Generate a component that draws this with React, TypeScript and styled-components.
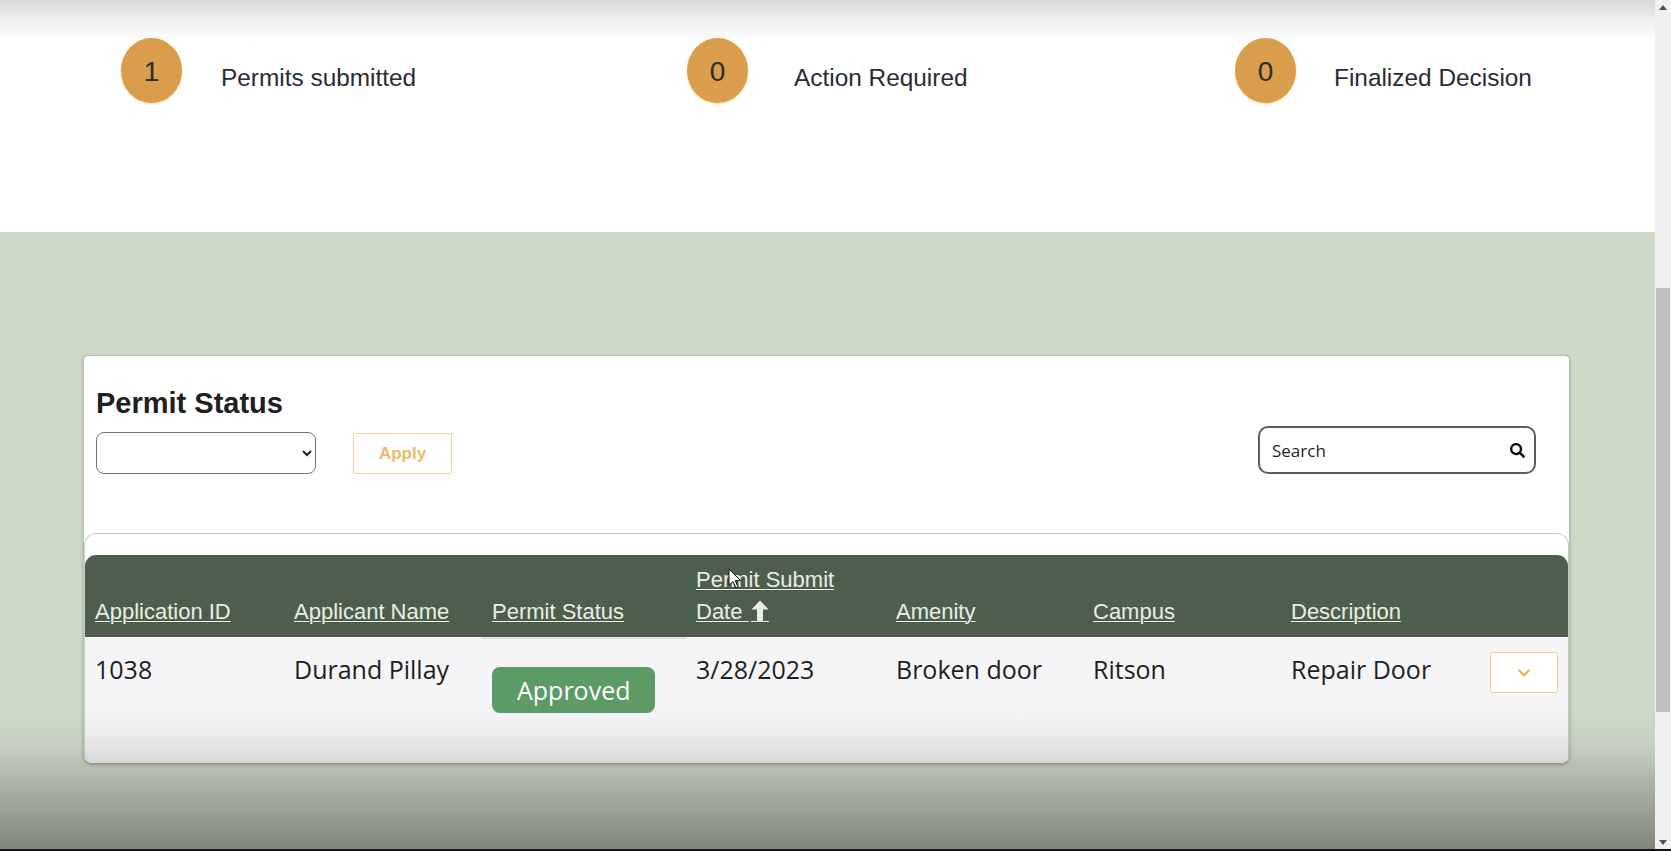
import React from "react";
import styled, { createGlobalStyle } from "styled-components";
import { FaSearch, FaChevronDown } from "react-icons/fa";

const GlobalStyle = createGlobalStyle`
  html, body { margin: 0; padding: 0; height: 100%; overflow: hidden; }
  body { font-family: "Liberation Sans", Arial, sans-serif; background: #cfd9c8; }
  #root { height: 100%; }
  * { box-sizing: border-box; }
`;

const COLUMNS = "199px 198px 204px 200px 197px 198px 199px 1fr";

const Screen = styled.div`
  position: relative;
  display: flex;
  width: 1671px;
  height: 851px;
  overflow: hidden;
  border-bottom: 2px solid #151515;
`;

const Page = styled.main`
  position: relative;
  flex: 1;
  min-width: 0;
  display: flex;
  flex-direction: column;
  background: #cfd9c8;
`;

const StatsBand = styled.section`
  height: 232px;
  flex: none;
  padding: 38px 0 0 121px;
  background: linear-gradient(#d8d8d8 0, #efefef 20px, #ffffff 42px);
  display: grid;
  grid-template-columns: 566px 548px 1fr;
  align-items: start;
`;

const Stat = styled.div<{ $gap: number }>`
  display: flex;
  align-items: flex-start;
  gap: ${(p) => p.$gap}px;
`;

const Bubble = styled.div`
  flex: none;
  width: 61px;
  height: 65px;
  border-radius: 50%;
  background: #d99d4b;
  box-shadow: 0 1px 2px rgba(255, 205, 110, 0.7);
  display: flex;
  align-items: center;
  justify-content: center;
  padding-top: 3px;
  font-size: 28px;
  color: #2a2a2a;
`;

const StatLabel = styled.span`
  margin-top: 25px;
  font-size: 24.4px;
  line-height: 29px;
  color: #2a2b33;
  white-space: nowrap;
`;

const Content = styled.section`
  flex: 1;
  padding: 123px 85px 0 83px;
`;

const Card = styled.div`
  background: #ffffff;
  border: 1px solid #b4c4ae;
  border-bottom-color: #9ea89b;
  border-radius: 5px 5px 9px 9px;
  box-shadow: 0 1px 3px rgba(50, 60, 45, 0.35);
  overflow: hidden;
`;

const Filters = styled.div`
  padding: 31px 33px 59px 12px;
`;

const Title = styled.h2`
  margin: 0 0 6px;
  font: bold 29px/33px "Liberation Sans", Arial, sans-serif;
  color: #202020;
`;

const Controls = styled.div`
  display: flex;
  align-items: flex-end;
`;

const StatusSelect = styled.select`
  width: 220px;
  height: 42px;
  border: 1.5px solid #747474;
  border-radius: 8px;
  background: #fff;
  padding: 0 8px;
  font: 17px "Open Sans", sans-serif;
  color: #222;
`;

const ApplyButton = styled.button`
  margin-left: 37px;
  width: 99px;
  height: 41px;
  border: 1px solid #f2d3a1;
  border-radius: 2px;
  background: #fff;
  font: bold 17px "Liberation Sans", Arial, sans-serif;
  color: #ecbb6c;
`;

const SearchBox = styled.label`
  margin-left: auto;
  width: 278px;
  height: 48px;
  display: flex;
  align-items: center;
  border: 2px solid #5a5f57;
  border-radius: 10px;
  padding: 0 9px 0 12px;
  background: #fff;
  color: #111;
`;

const SearchInput = styled.input`
  flex: 1;
  min-width: 0;
  border: none;
  outline: none;
  padding: 0;
  background: transparent;
  font: 17px "Open Sans", sans-serif;
  color: #1f1f1f;
  &::placeholder { color: #1f1f1f; opacity: 1; }
`;

const TableWrap = styled.div`
  border: 1px solid #c5cdc1;
  border-bottom: none;
  border-radius: 12px 12px 0 0;
  padding-top: 21px;
`;

const HeadRow = styled.div`
  display: grid;
  grid-template-columns: ${COLUMNS};
  align-items: end;
  height: 82px;
  padding: 9px 0;
  background: #4e5e4c;
  border-radius: 11px 11px 0 0;
`;

const HeadCell = styled.div`
  padding: 0 10px;
  font: 22px/32px "Liberation Sans", Arial, sans-serif;
`;

const SortLink = styled.a`
  color: #e9ede6;
  text-decoration: underline;
  text-decoration-thickness: 1px;
  text-underline-offset: 2px;
  cursor: pointer;
`;

const SortArrow = styled.span`
  display: inline-block;
  margin-left: 2px;
  margin-bottom: -3px;
  border-bottom: 1px solid currentColor;
  & svg { display: block; }
`;

const BodyRow = styled.div`
  display: grid;
  grid-template-columns: ${COLUMNS};
  height: 100px;
  background: #f5f5f7;
`;

const Cell = styled.div<{ $rule?: boolean }>`
  padding: ${(p) => (p.$rule ? "13px" : "15px")} 10px 0;
  border-top: ${(p) => (p.$rule ? "2px solid #e3e3e5" : "none")};
  font: 25px/34px "Open Sans", "Segoe UI", sans-serif;
  color: #1e1e1e;
  white-space: nowrap;
`;

const Badge = styled.span`
  display: block;
  width: fit-content;
  margin-top: 15px;
  height: 46px;
  padding: 0 25px;
  border-radius: 8px;
  background: #5c9a66;
  color: #ffffff;
  font: 25px/46px "Open Sans", "Segoe UI", sans-serif;
`;

const ToggleButton = styled.button`
  width: 68px;
  height: 41px;
  display: flex;
  align-items: center;
  justify-content: center;
  border: 1px solid #f1d092;
  border-radius: 3px;
  background: #fff;
  color: #eab04a;
  padding: 0;
`;

const TableFoot = styled.div`
  height: 26px;
  background: #efeff0;
`;

const BottomShade = styled.div`
  position: absolute;
  left: 0;
  right: 0;
  bottom: 0;
  height: 140px;
  pointer-events: none;
  background: linear-gradient(
    rgba(0, 0, 0, 0) 0%,
    rgba(0, 0, 0, 0.05) 28%,
    rgba(0, 0, 0, 0.12) 42%,
    rgba(0, 0, 0, 0.39) 100%
  );
`;

const Scrollbar = styled.div`
  flex: none;
  width: 16px;
  display: flex;
  flex-direction: column;
  align-items: center;
  background: #f0f0f0;
`;

const ScrollArrow = styled.div<{ $down?: boolean }>`
  height: 14px;
  width: 100%;
  display: flex;
  align-items: center;
  justify-content: center;
  &::before {
    content: "";
    border-left: 4px solid transparent;
    border-right: 4px solid transparent;
    ${(p) => (p.$down ? "border-top: 5px solid #505050;" : "border-bottom: 5px solid #505050;")}
  }
`;

const ScrollTrack = styled.div`
  flex: 1;
  width: 100%;
  padding: 274px 1px 123px;
  display: flex;
`;

const ScrollThumb = styled.div`
  flex: 1;
  background: #c1c1c1;
`;

const Pointer = styled.svg`
  position: absolute;
  left: 728px;
  top: 568px;
  pointer-events: none;
`;

const stats = [
  { n: 1, label: "Permits submitted", gap: 39 },
  { n: 0, label: "Action Required", gap: 46 },
  { n: 0, label: "Finalized Decision", gap: 38 },
];

function UpArrow() {
  return (
    <svg width="18" height="21" viewBox="0 0 18 21" aria-hidden="true">
      <path d="M9 0.5 L17.5 9.5 L12 9.5 L12 21 L6 21 L6 9.5 L0.5 9.5 Z" fill="currentColor" />
    </svg>
  );
}

export default function App() {
  return (
    <>
      <GlobalStyle />
      <Screen>
        <Page>
          <StatsBand>
            {stats.map((s) => (
              <Stat key={s.label} $gap={s.gap}>
                <Bubble>{s.n}</Bubble>
                <StatLabel>{s.label}</StatLabel>
              </Stat>
            ))}
          </StatsBand>

          <Content>
            <Card>
              <Filters>
                <Title>Permit Status</Title>
                <Controls>
                  <StatusSelect defaultValue="">
                    <option value=""></option>
                    <option value="approved">Approved</option>
                    <option value="pending">Pending</option>
                    <option value="rejected">Rejected</option>
                  </StatusSelect>
                  <ApplyButton type="button">Apply</ApplyButton>
                  <SearchBox>
                    <SearchInput placeholder="Search" />
                    <FaSearch size={15} />
                  </SearchBox>
                </Controls>
              </Filters>

              <TableWrap>
                <HeadRow>
                  <HeadCell><SortLink>Application ID</SortLink></HeadCell>
                  <HeadCell><SortLink>Applicant Name</SortLink></HeadCell>
                  <HeadCell><SortLink>Permit Status</SortLink></HeadCell>
                  <HeadCell>
                    <SortLink>
                      Permit Submit Date{" "}
                      <SortArrow><UpArrow /></SortArrow>
                    </SortLink>
                  </HeadCell>
                  <HeadCell><SortLink>Amenity</SortLink></HeadCell>
                  <HeadCell><SortLink>Campus</SortLink></HeadCell>
                  <HeadCell><SortLink>Description</SortLink></HeadCell>
                  <HeadCell />
                </HeadRow>
                <BodyRow>
                  <Cell>1038</Cell>
                  <Cell>Durand Pillay</Cell>
                  <Cell $rule>
                    <Badge>Approved</Badge>
                  </Cell>
                  <Cell>3/28/2023</Cell>
                  <Cell>Broken door</Cell>
                  <Cell>Ritson</Cell>
                  <Cell>Repair Door</Cell>
                  <Cell>
                    <ToggleButton type="button" aria-label="Expand">
                      <FaChevronDown size={14} />
                    </ToggleButton>
                  </Cell>
                </BodyRow>
                <TableFoot />
              </TableWrap>
            </Card>
          </Content>
          <BottomShade />
        </Page>

        <Scrollbar>
          <ScrollArrow />
          <ScrollTrack>
            <ScrollThumb />
          </ScrollTrack>
          <ScrollArrow $down />
        </Scrollbar>

        <Pointer width="14" height="22" viewBox="0 0 14 22" aria-hidden="true">
          <path
            d="M1 1 L1 17 L5 13.5 L7.8 20 L10 19 L7.3 12.6 L12.5 12.6 Z"
            fill="#ffffff"
            stroke="#111111"
            strokeWidth="1"
            strokeLinejoin="round"
          />
        </Pointer>
      </Screen>
    </>
  );
}
